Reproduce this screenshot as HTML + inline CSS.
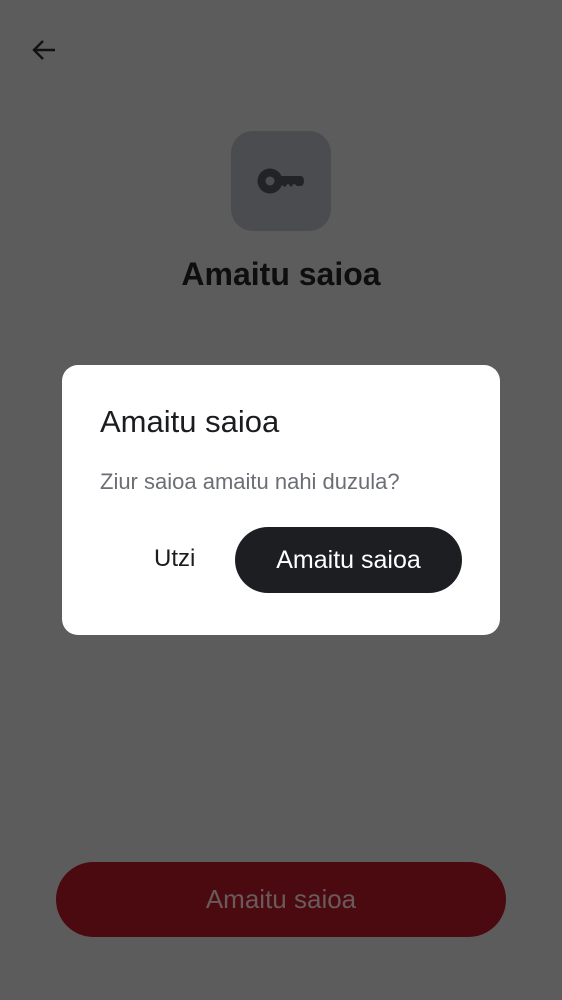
<!DOCTYPE html>
<html><head><style>
body{margin:0;width:562px;height:1000px;background:#5c5c5c;font-family:"Liberation Sans",Roboto,sans-serif;position:relative;overflow:hidden}
.abs{position:absolute}
</style></head><body>
<svg class="abs" style="left:28px;top:36px" width="30" height="30" viewBox="0 0 30 30"><path d="M27 14H6M15 5L6 14L15 23" stroke="#111" stroke-width="2.4" fill="none"/></svg>
<div class="abs" style="left:231px;top:131px;width:100px;height:100px;border-radius:22px;background:#4b4c4f"></div>
<svg class="abs" style="left:256px;top:167px" width="50" height="28" viewBox="0 0 50 28"><circle cx="14" cy="14" r="12.5" fill="#222326"/><circle cx="14" cy="14" r="4.5" fill="#4b4c4f"/><path d="M24 9H45a3 5 0 0 1 0 10H41l-3-2.5-3 3.5-3-3.5-3 3.5-5-3z" fill="#222326"/></svg>
<div class="abs" style="left:0;width:562px;top:256px;text-align:center;font-size:32px;font-weight:bold;color:#0e0e0e">Amaitu saioa</div>
<div class="abs" style="left:56px;top:862px;width:450px;height:75px;border-radius:38px;background:#4a0a10;color:#6a5a5b;font-size:26px;text-align:center;line-height:75px">Amaitu saioa</div>
<div class="abs" style="left:62px;top:365px;width:438px;height:270px;border-radius:16px;background:#fff">
<div class="abs" style="left:38px;top:39px;font-size:31px;color:#1b1c1f">Amaitu saioa</div>
<div class="abs" style="left:38px;top:104px;font-size:22px;color:#6b6e74">Ziur saioa amaitu nahi duzula?</div>
<div class="abs" style="left:92px;top:180px;font-size:24px;color:#1b1c1f">Utzi</div>
<div class="abs" style="left:173px;top:162px;width:227px;height:66px;border-radius:33px;background:#1d1e22;color:#fff;font-size:25px;text-align:center;line-height:66px">Amaitu saioa</div>
</div>
</body></html>
